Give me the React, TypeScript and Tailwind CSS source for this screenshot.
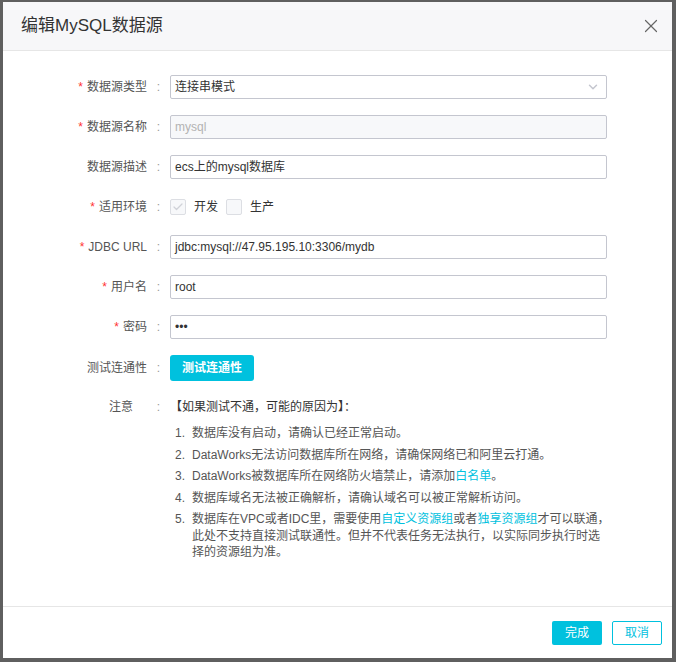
import { Check, ChevronDown, X } from 'lucide-react';

const font = { fontFamily: '"Liberation Sans", "Noto Sans CJK SC", sans-serif' };

function Row({ label, required, children }: { label: string; required?: boolean; children: React.ReactNode }) {
  return (
    <div className="flex items-center h-6">
      <div className="w-[144px] text-right text-[12px] text-[#555]">
        {required && <span className="text-[#f33] mr-1">*</span>}
        {label}
      </div>
      <div className="w-[23px] text-center text-[12px] text-[#999]">:</div>
      <div className="flex-1 flex items-center">{children}</div>
    </div>
  );
}

function TextInput({ value, disabled }: { value: string; disabled?: boolean }) {
  return (
    <div
      className={`w-[437px] h-6 border border-[#c4c6cf] rounded-[2px] px-[4px] flex items-center text-[12px] ${
        disabled ? 'bg-[#f7f8fa] text-[#b3b3b3]' : 'bg-white text-[#333]'
      }`}
    >
      {value}
    </div>
  );
}

function Box({ checked }: { checked?: boolean }) {
  return (
    <span className="w-4 h-4 border border-[#dcdee3] bg-[#f7f8fa] rounded-[2px] flex items-center justify-center">
      {checked && <Check size={12} strokeWidth={2.5} className="text-[#d0d2d8]" />}
    </span>
  );
}

const link = 'text-[#00c1de]';

export default function App() {
  return (
    <div className="w-[676px] h-[662px] bg-[#5f5f5f] pt-[2px] pl-[3px]" style={font}>
      <div className="w-[669px] h-[656px] bg-white flex flex-col">
        <div className="h-[49px] bg-[#f7f7f9] border-b border-[#e6e6e6] flex items-center justify-between pl-[18px] pr-[10px]">
          <h2 className="text-[17px] text-[#333]">编辑MySQL数据源</h2>
          <X size={22} strokeWidth={1.3} className="text-[#666]" />
        </div>

        <div className="flex-1 pt-[24px] flex flex-col gap-4">
          <Row label="数据源类型" required>
            <div className="w-[437px] h-6 border border-[#c4c6cf] rounded-[2px] pl-[4px] pr-[6px] flex items-center justify-between text-[12px] text-[#333] bg-white">
              连接串模式
              <ChevronDown size={14} strokeWidth={2.5} className="text-[#c4c6cf]" />
            </div>
          </Row>
          <Row label="数据源名称" required>
            <TextInput value="mysql" disabled />
          </Row>
          <Row label="数据源描述">
            <TextInput value="ecs上的mysql数据库" />
          </Row>
          <Row label="适用环境" required>
            <div className="flex items-center text-[12px] text-[#333]">
              <Box checked />
              <span className="ml-2">开发</span>
              <span className="ml-2">
                <Box />
              </span>
              <span className="ml-2">生产</span>
            </div>
          </Row>
          <Row label="JDBC URL" required>
            <TextInput value="jdbc:mysql://47.95.195.10:3306/mydb" />
          </Row>
          <Row label="用户名" required>
            <TextInput value="root" />
          </Row>
          <Row label="密码" required>
            <TextInput value="•••" />
          </Row>
          <div className="flex items-center h-[26px]">
            <div className="w-[144px] text-right text-[12px] text-[#555]">测试连通性</div>
            <div className="w-[23px] text-center text-[12px] text-[#999]">:</div>
            <button className="h-[26px] px-[12px] bg-[#00c1de] rounded-[3px] text-white text-[12px] font-bold">
              测试连通性
            </button>
          </div>

          <div className="flex items-start mt-[2px] text-[12px]">
            <div className="w-[144px] text-right text-[#555] pr-[14px] leading-[17px]">注意</div>
            <div className="w-[23px] text-center text-[#999] leading-[17px]">:</div>
            <div className="flex-1">
              <div className="text-[#333] leading-[17px]">【如果测试不通，可能的原因为】：</div>
              <ol className="mt-[9px] ml-[5px] flex flex-col gap-[5px] text-[#555] leading-[16.5px]">
                <li className="flex">
                  <span className="w-[17px]">1.</span>
                  <span>数据库没有启动，请确认已经正常启动。</span>
                </li>
                <li className="flex">
                  <span className="w-[17px]">2.</span>
                  <span>DataWorks无法访问数据库所在网络，请确保网络已和阿里云打通。</span>
                </li>
                <li className="flex">
                  <span className="w-[17px]">3.</span>
                  <span>
                    DataWorks被数据库所在网络防火墙禁止，请添加<span className={link}>白名单</span>。
                  </span>
                </li>
                <li className="flex">
                  <span className="w-[17px]">4.</span>
                  <span>数据库域名无法被正确解析，请确认域名可以被正常解析访问。</span>
                </li>
                <li className="flex">
                  <span className="w-[17px] shrink-0">5.</span>
                  <span>
                    数据库在VPC或者IDC里，需要使用<span className={link}>自定义资源组</span>或者
                    <span className={link}>独享资源组</span>才可以联通，
                    <br />
                    此处不支持直接测试联通性。但并不代表任务无法执行，以实际同步执行时选
                    <br />
                    择的资源组为准。
                  </span>
                </li>
              </ol>
            </div>
          </div>
        </div>

        <div className="h-[52px] border-t border-[#e6e6e6] flex items-center justify-end gap-[10px] pr-[10px]">
          <button className="w-[50px] h-6 bg-[#00c1de] rounded-[2px] text-white text-[12px]">完成</button>
          <button className="w-[50px] h-6 border border-[#00c1de] bg-white rounded-[2px] text-[#00c1de] text-[12px]">
            取消
          </button>
        </div>
      </div>
    </div>
  );
}
